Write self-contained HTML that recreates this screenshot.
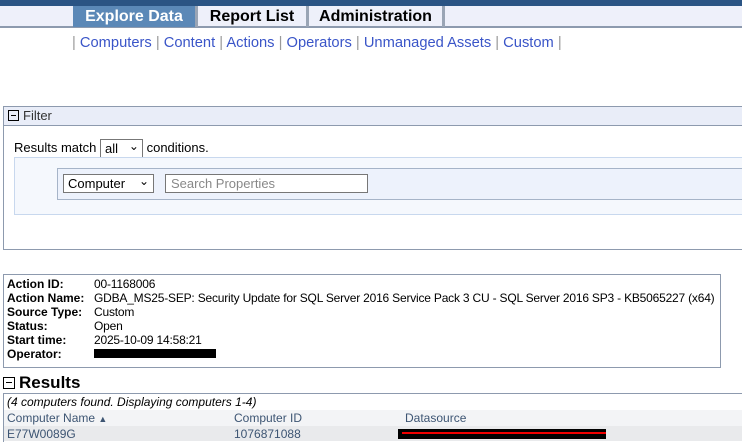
<!DOCTYPE html>
<html><head><style>
body{margin:0;width:742px;height:441px;overflow:hidden;background:#fff;font-family:"Liberation Sans",sans-serif;position:relative}
.abs{position:absolute}
.top{left:0;top:0;width:742px;height:6px;background:#2b5484}
.tabs{left:0;top:6px;width:742px;height:20px;background:#eef0fa;border-bottom:2px solid #8d9aae}
.tab{top:6px;height:21px;font-weight:bold;font-size:16px;line-height:21px;text-align:center;border-right:3px solid #9aa5b5}
.sub{top:35px;left:72px;font-size:14.7px;color:#3a55c8;white-space:pre}
.sub span{color:#999}
.fh{left:3px;top:106px;width:739px;height:18px;background:#e9edf8;border:1px solid #8d9aae;font-size:13px;color:#333;line-height:18px}
.minus{display:inline-block;width:9px;height:9px;border:1px solid #000;position:relative;vertical-align:middle;margin:0 4px 2px 4px}
.minus:after{content:"";position:absolute;left:2px;right:2px;top:4px;height:1px;background:#000}
.sel{border:1px solid #777;background:#fff;height:19px;font-size:14px;line-height:17px;box-sizing:border-box}
.lbl{font-size:12px;white-space:nowrap;line-height:14px}
</style></head><body>
<div class="abs top"></div>
<div class="abs tabs"></div>
<div class="abs tab" style="left:73px;width:122px;background:#5b88b7;color:#fff">Explore Data</div>
<div class="abs tab" style="left:198px;width:108px">Report List</div>
<div class="abs tab" style="left:309px;width:133px">Administration</div>
<div class="abs sub"><span>|</span> Computers <span>|</span> Content <span>|</span> Actions <span>|</span> Operators <span>|</span> Unmanaged Assets <span>|</span> Custom <span>|</span></div>

<div class="abs fh"><span class="minus"></span>Filter</div>
<div class="abs" style="left:3px;top:125px;width:739px;height:124px;border-left:1px solid #8d9aae;border-bottom:1px solid #8d9aae"></div>
<div class="abs" style="left:14px;top:139px;font-size:13px;line-height:17px">Results match <span class="sel" style="display:inline-block;position:relative;width:43px;padding-left:4px;font-size:13px;vertical-align:middle">all<span style="position:absolute;right:3px;top:-2px;font-size:12px">&#x2304;</span></span> conditions.</div>
<div class="abs" style="left:14px;top:157px;width:728px;height:56px;background:#f5f8fd;border:1px solid #c8d8ee;border-right:none"></div>
<div class="abs" style="left:57px;top:168px;width:685px;height:30px;background:#edf2fc;border:1px solid #a6b4c8;border-right:none"></div>
<div class="abs sel" style="left:63px;top:174px;width:91px;padding-left:4px;font-size:13px">Computer<span style="position:absolute;right:4px;top:-2px;font-size:12px">&#x2304;</span></div>
<div class="abs sel" style="left:165px;top:174px;width:203px;padding-left:5px;font-size:13px;color:#888">Search Properties</div>

<div class="abs" style="left:3px;top:274px;width:716px;height:92px;border:1px solid #8d9aae"></div>
<div class="abs lbl" style="left:7px;top:277px;font-weight:bold">Action ID:<br>Action Name:<br>Source Type:<br>Status:<br>Start time:<br>Operator:</div>
<div class="abs lbl" style="left:94px;top:277px;letter-spacing:-0.2px">00-1168006<br>GDBA_MS25-SEP: Security Update for SQL Server 2016 Service Pack 3 CU - SQL Server 2016 SP3 - KB5065227 (x64)<br>Custom<br>Open<br>2025-10-09 14:58:21<br><span style="display:inline-block;width:122px;height:9px;background:#000"></span></div>

<div class="abs" style="left:3px;top:373px;font-size:17px;font-weight:bold"><span class="minus" style="margin-left:0;width:10px;height:10px"></span>Results</div>
<div class="abs" style="left:3px;top:393px;width:739px;height:48px;border-top:1px solid #8d9aae;border-left:1px solid #8d9aae"></div>
<div class="abs lbl" style="left:7px;top:395px;font-style:italic">(4 computers found. Displaying computers 1-4)</div>
<div class="abs" style="left:4px;top:410px;width:738px;height:16px;background:#f3f4f6"></div>
<div class="abs lbl" style="left:7px;top:411px;color:#3d5573">Computer Name <span style="font-size:9px">&#9650;</span></div>
<div class="abs lbl" style="left:234px;top:411px;color:#3d5573">Computer ID</div>
<div class="abs lbl" style="left:405px;top:411px;color:#3d5573">Datasource</div>
<div class="abs" style="left:4px;top:426px;width:738px;height:15px;background:#e9eaec"></div>
<div class="abs lbl" style="left:7px;top:427px;color:#3d5573">E77W0089G</div>
<div class="abs lbl" style="left:234px;top:427px;color:#3d5573">1076871088</div>
<div class="abs" style="left:398px;top:429px;width:208px;height:10px;background:#000"></div>
<div class="abs" style="left:402px;top:432px;width:204px;height:2px;background:#e00"></div>
</body></html>
